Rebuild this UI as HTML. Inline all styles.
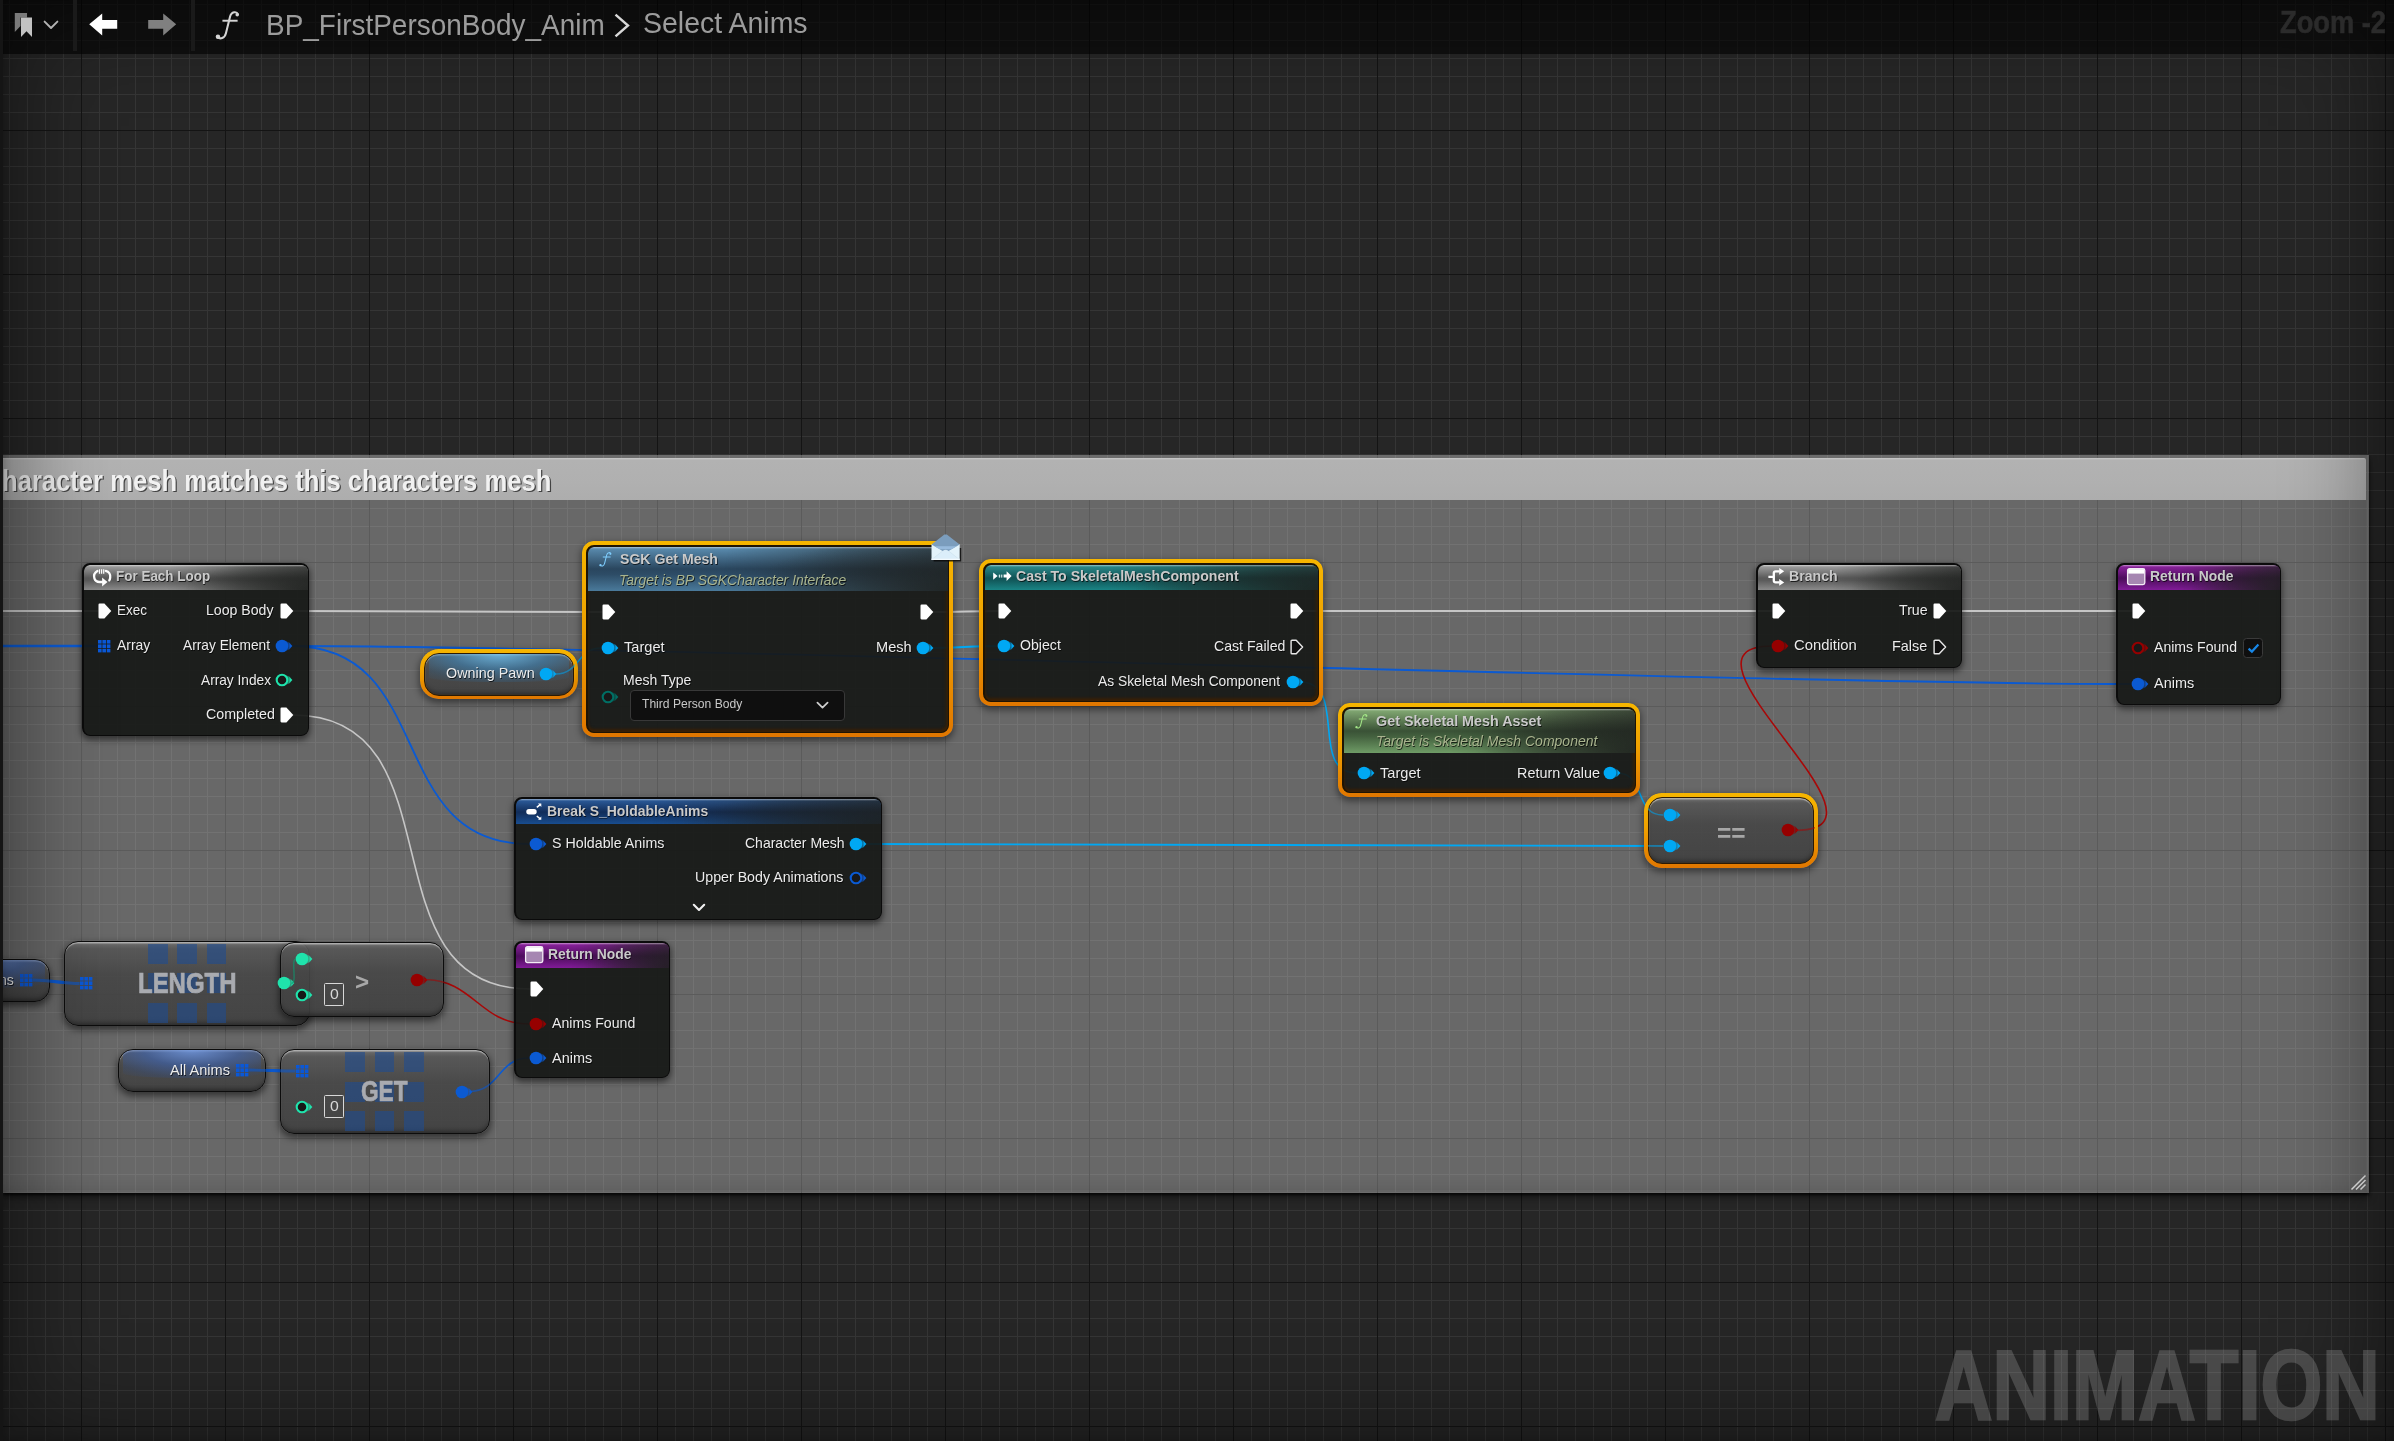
<!DOCTYPE html>
<html lang="en">
<head>
<meta charset="utf-8">
<title>BP_FirstPersonBody_Anim - Select Anims</title>
<style>
html,body{margin:0;padding:0;background:#151515;}
body{width:2394px;height:1441px;overflow:hidden;position:relative;font-family:"Liberation Sans",sans-serif;}
#graph{position:absolute;left:3px;top:0;width:2391px;height:1441px;overflow:hidden;background-color:#262626;
 background-image:
  linear-gradient(to right,#141414 1px,transparent 1px),
  linear-gradient(to bottom,#141414 1px,transparent 1px),
  linear-gradient(to right,#353535 1px,transparent 1px),
  linear-gradient(to bottom,#353535 1px,transparent 1px);
 background-size:144px 144px,144px 144px,18px 18px,18px 18px;
 background-position:78px 0,0 130px,6px 0,0 4px;}
#g{position:absolute;left:0;top:0;width:2394px;height:1441px;overflow:hidden}
.a{position:absolute;display:block;overflow:visible}
.t{position:absolute;white-space:nowrap;transform-origin:0 50%;display:block;}
#comment{position:absolute;left:3px;top:455px;width:2366px;height:738px;background:rgba(255,255,255,.305);box-shadow:0 2px 2.5px rgba(0,0,0,.75),0 5px 8px rgba(0,0,0,.4);}
#comment .in{position:absolute;left:0;top:0;right:0;bottom:0;box-shadow:inset 0 0 0 3px rgba(255,255,255,.03), inset 0 -14px 14px -10px rgba(0,0,0,.12);}
#ctitle{position:absolute;left:0;top:3px;width:2363px;height:42px;background:linear-gradient(to bottom,#c9c9c9 0,#b2b2b2 2px,#b0b0b0 60%,#adadad 100%);border-radius:0 2px 0 0;overflow:hidden}
#ctitle span{position:absolute;right:1816.5px;top:4px;font-size:28px;line-height:34px;font-weight:700;color:#f1f1f1;white-space:nowrap;text-shadow:1.6px 1.6px 0 rgba(0,0,0,.75);transform-origin:100% 50%;}
.node{position:absolute;box-sizing:border-box;background:rgba(23,25,23,.93);border:solid #0b0b0b;border-width:2px 1px 1px 2px;box-shadow:0 3px 6px 1px rgba(0,0,0,.5);overflow:hidden;}
.node.s{border-color:#1e1404;box-shadow:inset 0 -4px 3px -1px rgba(60,32,4,.85),inset -4px 0 3px -1.5px rgba(58,34,4,.6),inset 0 0 2px 1px rgba(58,34,4,.5);}
.hdr{position:absolute;left:0;right:0;top:0;border-radius:6px 6px 0 0;}
.hdr:before{content:"";position:absolute;left:0;top:0;right:0;bottom:0;border-radius:6px 6px 0 0;background:
  linear-gradient(to bottom,rgba(255,255,255,.5) 0,rgba(255,255,255,.12) 1.4px,rgba(255,255,255,0) 2.5px),
  radial-gradient(ellipse 55% 130% at 100% 100%,rgba(28,30,28,.75) 0,rgba(28,30,28,.35) 55%,rgba(28,30,28,0) 100%),linear-gradient(100deg,rgba(34,36,34,0) 0%,rgba(34,36,34,0) 38%,rgba(34,36,34,.4) 70%,rgba(36,38,36,.68) 100%);}
.h-gray{background:linear-gradient(to bottom,#a4a4a4 0,#5a5a5a 52%,#5c5c5c 62%,#8b8b8b 100%)}
.h-func{background:linear-gradient(to bottom,#5c8fb3 0,#2a465e 50%,#2d4c66 62%,#4a7a9b 100%)}
.h-cast{background:linear-gradient(to bottom,#2d8f90 0,#115456 52%,#125a5c 62%,#1a8485 100%)}
.h-pure{background:linear-gradient(to bottom,#86ad76 0,#3a5236 50%,#43603e 62%,#6f9c66 100%)}
.h-ret{background:linear-gradient(to bottom,#9024a2 0,#4e0d5e 52%,#551065 62%,#811b98 100%)}
.h-struct{background:linear-gradient(to bottom,#2e5f9f 0,#112d5a 52%,#133363 62%,#184d90 100%)}
.sel{position:absolute;box-sizing:border-box;padding:5.5px;background:linear-gradient(to bottom,#f6b600 0,#f0a200 45%,#e07600 100%);-webkit-mask:linear-gradient(#000 0 0) content-box,linear-gradient(#000 0 0);-webkit-mask-composite:xor;mask:linear-gradient(#000 0 0) content-box exclude,linear-gradient(#000 0 0);}
.selsh{position:absolute;box-shadow:0 3px 7px 1px rgba(0,0,0,.45);}
.cnode{position:absolute;box-sizing:border-box;border:1.6px solid #0c0c0c;background:linear-gradient(to bottom,rgba(112,112,112,.92) 0,rgba(86,86,86,.9) 8%,rgba(70,70,70,.9) 40%,rgba(64,64,64,.9) 100%);box-shadow:inset 0 1.6px 1px -0.2px rgba(255,255,255,.45),inset 0 -5px 5px -3px rgba(0,0,0,.4),0 3px 7px 1px rgba(0,0,0,.5);overflow:hidden}
.cnode.s{border-color:#2a1a05;box-shadow:inset 0 1.6px 1px -0.2px rgba(255,255,255,.45),inset 0 -5px 5px -3px rgba(0,0,0,.4);}
.cnode i{position:absolute;left:3%;right:3%;top:0;height:68%;border-radius:0 0 40% 40%/0 0 18% 18%;}
.cnode.v-obj i{background:radial-gradient(ellipse 78% 125% at 50% 0,rgba(110,190,235,.85) 0,rgba(60,130,180,.62) 45%,rgba(50,100,140,.3) 78%,rgba(50,100,140,0) 100%);}
.cnode.v-struct i{background:radial-gradient(ellipse 78% 125% at 50% 0,rgba(110,150,225,.85) 0,rgba(60,100,180,.6) 45%,rgba(50,80,140,.3) 78%,rgba(50,80,140,0) 100%);}
.sq{position:absolute;background:rgba(30,76,146,.58)}
.box{position:absolute;box-sizing:border-box;}
#toolbar{position:absolute;left:3px;top:0;width:2391px;height:54px;background:rgba(0,0,0,.58);}
#vig{position:absolute;left:3px;top:0;width:2391px;height:1441px;box-shadow:inset 0 0 90px 18px rgba(0,0,0,.40), inset 0 0 10px 0 rgba(0,0,0,.25);pointer-events:none}
.sep{position:absolute;top:0;width:4px;height:50px;background:#1a1a1a}
</style>
</head>
<body>
<div id="graph"></div>
<div id="g">
<div id="comment"><div class="in"></div><div id="ctitle"></div>
<svg class="a" style="right:3px;bottom:3.5px" width="15" height="15" viewBox="0 0 15 15"><path d="M0.5 14.5 L14.5 0.5 M5 14.5 L14.5 5 M9.5 14.5 L14.5 9.5" stroke="#ececec" stroke-width="1.5" fill="none"/></svg>
</div>
<svg class="a" style="left:0;top:0" width="2394" height="1441" viewBox="0 0 2394 1441" stroke-linecap="round">
<path d="M3.0 611.0 C34.7 611.0 66.3 611.0 98.0 611.0" stroke="#c6c6c6" stroke-width="1.9" fill="none" opacity="1.0"/>
<path d="M293.0 611.0 C396.3 611.0 498.7 612.0 602.0 612.0" stroke="#c6c6c6" stroke-width="1.9" fill="none" opacity="1.0"/>
<path d="M934.0 612.0 C955.7 612.0 976.3 611.0 998.0 611.0" stroke="#c6c6c6" stroke-width="1.9" fill="none" opacity="1.0"/>
<path d="M1304.0 611.0 C1460.0 611.0 1616.0 611.0 1772.0 611.0" stroke="#c6c6c6" stroke-width="1.9" fill="none" opacity="1.0"/>
<path d="M1946.0 611.0 C2008.0 611.0 2070.0 611.0 2132.0 611.0" stroke="#c6c6c6" stroke-width="1.9" fill="none" opacity="1.0"/>
<path d="M293.0 715.0 C463.3 715.0 359.7 989.0 530.0 989.0" stroke="#c6c6c6" stroke-width="1.6" fill="none" opacity="1.0"/>
<path d="M3.0 646.0 C34.7 646.0 66.3 646.0 98.0 646.0" stroke="#0b5ad2" stroke-width="2.6" fill="none" opacity="1.0"/>
<path d="M292.0 646.0 C638.0 646.0 1785.0 684.0 2131.0 684.0" stroke="#0b5ad2" stroke-width="1.8" fill="none" opacity="1.0"/>
<path d="M292.0 646.0 C437.0 646.0 384.0 844.0 529.0 844.0" stroke="#0b5ad2" stroke-width="1.8" fill="none" opacity="1.0"/>
<path d="M556.0 674.0 C579.7 674.0 577.3 648.0 601.0 648.0" stroke="#00a8f4" stroke-width="1.6" fill="none" opacity="1.0"/>
<path d="M930.0 648.0 C953.3 648.0 974.7 646.0 998.0 646.0" stroke="#00a8f4" stroke-width="1.8" fill="none" opacity="1.0"/>
<path d="M1300.0 682.0 C1349.3 682.0 1307.7 773.0 1357.0 773.0" stroke="#00a8f4" stroke-width="1.6" fill="none" opacity="1.0"/>
<path d="M1617.0 773.0 C1646.3 773.0 1633.7 815.0 1663.0 815.0" stroke="#00a8f4" stroke-width="1.6" fill="none" opacity="1.0"/>
<path d="M862.0 844.0 C1129.7 844.0 1395.3 846.0 1663.0 846.0" stroke="#00a8f4" stroke-width="1.8" fill="none" opacity="1.0"/>
<path d="M1795.6 830.4 C1911.4 830.4 1656.2 646.0 1772.0 646.0" stroke="#a80808" stroke-width="1.6" fill="none" opacity="1.0"/>
<path d="M424.0 979.5 C473.8 979.5 479.2 1024.0 529.0 1024.0" stroke="#a80808" stroke-width="1.6" fill="none" opacity="1.0"/>
<path d="M469.0 1091.5 C500.2 1091.5 497.8 1058.0 529.0 1058.0" stroke="#0b5ad2" stroke-width="1.6" fill="none" opacity="1.0"/>
<path d="M32.6 980.0 C49.4 980.0 62.8 983.5 79.6 983.5" stroke="#0b5ad2" stroke-width="2.8" fill="none" opacity="1.0"/>
<path d="M248.6 1070.0 C264.6 1070.0 279.6 1071.0 295.6 1071.0" stroke="#0b5ad2" stroke-width="2.8" fill="none" opacity="1.0"/>
</svg>
<span class="t " style="left:1.61px;top:463.65px;font-size:29px;line-height:35px;font-weight:700;color:#f1f1f1;text-shadow:1.4px 1.4px 0.4px rgba(0,0,0,.62);transform:scaleX(0.8829);">haracter mesh matches this characters mesh</span>
<div class="cnode v-struct" style="left:-98.0px;top:959.0px;width:148.0px;height:42.5px;border-radius:15px"><i></i></div>
<span class="t " style="left:-0.52px;top:971.51px;font-size:14.4px;line-height:17px;color:#ececec;text-shadow:0.7px 0.9px 0 rgba(0,0,0,.7);transform:scaleX(0.9817);">ns</span>
<svg class="a" style="left:19.9px;top:973.8px" width="12.4" height="12.4" viewBox="0 0 12.4 12.4"><rect x="0.0" y="0.0" width="3.6" height="3.6" fill="#0a58d8"/><rect x="0.0" y="4.4" width="3.6" height="3.6" fill="#0a58d8"/><rect x="0.0" y="8.8" width="3.6" height="3.6" fill="#0a58d8"/><rect x="4.4" y="0.0" width="3.6" height="3.6" fill="#0a58d8"/><rect x="4.4" y="4.4" width="3.6" height="3.6" fill="#0a58d8"/><rect x="4.4" y="8.8" width="3.6" height="3.6" fill="#0a58d8"/><rect x="8.8" y="0.0" width="3.6" height="3.6" fill="#0a58d8"/><rect x="8.8" y="4.4" width="3.6" height="3.6" fill="#0a58d8"/><rect x="8.8" y="8.8" width="3.6" height="3.6" fill="#0a58d8"/></svg>
<div class="node" style="left:82.0px;top:563.0px;width:227.0px;height:173.0px;border-radius:8px">
<div class="hdr h-gray" style="height:25.0px"></div>
</div>
<svg class="a" style="left:92.7px;top:568.6px" width="19" height="18" viewBox="0 0 19 18"><path d="M4.4 2.0 C1.6 3.6 0.6 6.6 1.4 9.4 C2.2 12.0 4.2 13.0 6.6 13.0 H9.4" fill="none" stroke="#fff" stroke-width="2.3" stroke-linecap="round"/><path d="M9.1 8.5 L14.5 12.9 L9.1 17.4 Z" fill="#fff"/><path d="M12.8 1.8 C16.0 2.6 17.6 5.6 17.2 8.4 C17.1 9.6 16.8 10.6 16.3 11.4" fill="none" stroke="#fff" stroke-width="2.3" stroke-linecap="round"/><path d="M6.5 0.2 V4.7 M8.6 0.2 V4.7 M10.7 0.2 V4.7" stroke="#fff" stroke-width="1.2" fill="none"/></svg>
<span class="t " style="left:115.63px;top:567.44px;font-size:14.6px;line-height:18px;font-weight:700;color:#cacaca;text-shadow:0.7px 0.9px 0 rgba(0,0,0,.7);transform:scaleX(0.9219);">For Each Loop</span>
<svg class="a" style="left:98.0px;top:603.0px" width="14" height="16" viewBox="0 0 14 16"><path d="M1.6 0.6 H6.4 L13.3 8 L6.4 15.4 H1.6 Q0.5 15.4 0.5 14.3 V1.7 Q0.5 0.6 1.6 0.6 Z" fill="#fff"/></svg>
<span class="t " style="left:116.52px;top:602.41px;font-size:14.4px;line-height:17px;color:#ececec;text-shadow:0.7px 0.9px 0 rgba(0,0,0,.7);transform:scaleX(0.9401);">Exec</span>
<span class="t " style="left:206.17px;top:602.41px;font-size:14.4px;line-height:17px;color:#ececec;text-shadow:0.7px 0.9px 0 rgba(0,0,0,.7);transform:scaleX(0.9811);">Loop Body</span>
<svg class="a" style="left:280.0px;top:603.0px" width="14" height="16" viewBox="0 0 14 16"><path d="M1.6 0.6 H6.4 L13.3 8 L6.4 15.4 H1.6 Q0.5 15.4 0.5 14.3 V1.7 Q0.5 0.6 1.6 0.6 Z" fill="#fff"/></svg>
<svg class="a" style="left:98.0px;top:639.8px" width="12.4" height="12.4" viewBox="0 0 12.4 12.4"><rect x="0.0" y="0.0" width="3.6" height="3.6" fill="#0a58d8"/><rect x="0.0" y="4.4" width="3.6" height="3.6" fill="#0a58d8"/><rect x="0.0" y="8.8" width="3.6" height="3.6" fill="#0a58d8"/><rect x="4.4" y="0.0" width="3.6" height="3.6" fill="#0a58d8"/><rect x="4.4" y="4.4" width="3.6" height="3.6" fill="#0a58d8"/><rect x="4.4" y="8.8" width="3.6" height="3.6" fill="#0a58d8"/><rect x="8.8" y="0.0" width="3.6" height="3.6" fill="#0a58d8"/><rect x="8.8" y="4.4" width="3.6" height="3.6" fill="#0a58d8"/><rect x="8.8" y="8.8" width="3.6" height="3.6" fill="#0a58d8"/></svg>
<span class="t " style="left:116.50px;top:637.41px;font-size:14.4px;line-height:17px;color:#ececec;text-shadow:0.7px 0.9px 0 rgba(0,0,0,.7);transform:scaleX(0.9676);">Array</span>
<span class="t " style="left:183.40px;top:637.41px;font-size:14.4px;line-height:17px;color:#ececec;text-shadow:0.7px 0.9px 0 rgba(0,0,0,.7);transform:scaleX(0.9544);">Array Element</span>
<svg class="a" style="left:274.4px;top:638.0px" width="20" height="16" viewBox="0 0 20 16"><path d="M12.5 3.4 L16.2 5.1 V10.9 L12.5 12.6 Z" fill="#0b5ad2" opacity=".55"/><path d="M15.5 5.1 L18.4 8 L15.5 10.9 Z" fill="#0b5ad2"/><circle cx="8" cy="8" r="6.35" fill="#0b5ad2"/></svg>
<span class="t " style="left:200.50px;top:671.61px;font-size:14.4px;line-height:17px;color:#ececec;text-shadow:0.7px 0.9px 0 rgba(0,0,0,.7);transform:scaleX(0.9509);">Array Index</span>
<svg class="a" style="left:274.4px;top:672.2px" width="20" height="16" viewBox="0 0 20 16"><path d="M12.5 3.4 L16.2 5.1 V10.9 L12.5 12.6 Z" fill="#1fe3ac" opacity=".55"/><path d="M15.5 5.1 L18.4 8 L15.5 10.9 Z" fill="#1fe3ac"/><circle cx="8" cy="8" r="5.3" fill="#181818" stroke="#1fe3ac" stroke-width="2.1"/></svg>
<span class="t " style="left:205.59px;top:706.41px;font-size:14.4px;line-height:17px;color:#ececec;text-shadow:0.7px 0.9px 0 rgba(0,0,0,.7);transform:scaleX(0.9906);">Completed</span>
<svg class="a" style="left:280.0px;top:707.0px" width="14" height="16" viewBox="0 0 14 16"><path d="M1.6 0.6 H6.4 L13.3 8 L6.4 15.4 H1.6 Q0.5 15.4 0.5 14.3 V1.7 Q0.5 0.6 1.6 0.6 Z" fill="#fff"/></svg>
<div class="selsh" style="left:420.3px;top:649.0px;width:158.0px;height:50.3px;border-radius:18.6px"></div><div class="sel" style="left:420.3px;top:649.0px;width:158.0px;height:50.3px;border-radius:18.6px"></div>
<div class="cnode v-obj s" style="left:424.0px;top:653.0px;width:150.0px;height:42.5px;border-radius:15px"><i></i></div>
<span class="t " style="left:445.55px;top:665.21px;font-size:14.4px;line-height:17px;color:#ececec;text-shadow:0.7px 0.9px 0 rgba(0,0,0,.7);transform:scaleX(0.9984);">Owning Pawn</span>
<svg class="a" style="left:538.3px;top:666.0px" width="20" height="16" viewBox="0 0 20 16"><path d="M12.5 3.4 L16.2 5.1 V10.9 L12.5 12.6 Z" fill="#00a8f4" opacity=".55"/><path d="M15.5 5.1 L18.4 8 L15.5 10.9 Z" fill="#00a8f4"/><circle cx="8" cy="8" r="6.35" fill="#00a8f4"/></svg>
<div class="selsh" style="left:582.3px;top:541.0px;width:371.0px;height:195.8px;border-radius:11.6px"></div><div class="sel" style="left:582.3px;top:541.0px;width:371.0px;height:195.8px;border-radius:11.6px"></div>
<div class="node s" style="left:586.0px;top:545.0px;width:363.0px;height:188.0px;border-radius:8px">
<div class="hdr h-func" style="height:44.0px"></div>
</div>
<svg class="a" style="left:599.4px;top:551.8px" width="12.6" height="15.0" viewBox="0 0 12.6 15"><path d="M11.8 1.7 C11.2 0.2 8.4 0.0 7.7 3.0 L5.6 11.4 C4.9 14.2 2.6 14.6 1.2 13.4" fill="none" stroke="#80cfff" stroke-width="1.05" stroke-linecap="round"/><path d="M3.8 5.0 H11.6" stroke="#80cfff" stroke-width="1.0" fill="none"/><circle cx="1.5" cy="13.2" r="1.15" fill="#80cfff"/><circle cx="11.4" cy="1.9" r="0.9" fill="#80cfff"/></svg>
<span class="t " style="left:619.98px;top:549.94px;font-size:14.6px;line-height:18px;font-weight:700;color:#cacaca;text-shadow:0.7px 0.9px 0 rgba(0,0,0,.7);transform:scaleX(0.9662);">SGK Get Mesh</span>
<span class="t " style="left:619.35px;top:571.51px;font-size:14.4px;line-height:17px;font-style:italic;color:#a9b48e;text-shadow:0.7px 0.9px 0 rgba(0,0,0,.7);transform:scaleX(0.9678);">Target is BP SGKCharacter Interface</span>
<svg class="a" style="left:602.0px;top:604.0px" width="14" height="16" viewBox="0 0 14 16"><path d="M1.6 0.6 H6.4 L13.3 8 L6.4 15.4 H1.6 Q0.5 15.4 0.5 14.3 V1.7 Q0.5 0.6 1.6 0.6 Z" fill="#fff"/></svg>
<svg class="a" style="left:920.0px;top:604.0px" width="14" height="16" viewBox="0 0 14 16"><path d="M1.6 0.6 H6.4 L13.3 8 L6.4 15.4 H1.6 Q0.5 15.4 0.5 14.3 V1.7 Q0.5 0.6 1.6 0.6 Z" fill="#fff"/></svg>
<svg class="a" style="left:600.0px;top:639.6px" width="20" height="16" viewBox="0 0 20 16"><path d="M12.5 3.4 L16.2 5.1 V10.9 L12.5 12.6 Z" fill="#00a8f4" opacity=".55"/><path d="M15.5 5.1 L18.4 8 L15.5 10.9 Z" fill="#00a8f4"/><circle cx="8" cy="8" r="6.35" fill="#00a8f4"/></svg>
<span class="t " style="left:624.21px;top:638.81px;font-size:14.4px;line-height:17px;color:#ececec;text-shadow:0.7px 0.9px 0 rgba(0,0,0,.7);transform:scaleX(1.0152);">Target</span>
<span class="t " style="left:875.93px;top:638.81px;font-size:14.4px;line-height:17px;color:#ececec;text-shadow:0.7px 0.9px 0 rgba(0,0,0,.7);transform:scaleX(1.0123);">Mesh</span>
<svg class="a" style="left:915.2px;top:639.6px" width="20" height="16" viewBox="0 0 20 16"><path d="M12.5 3.4 L16.2 5.1 V10.9 L12.5 12.6 Z" fill="#00a8f4" opacity=".55"/><path d="M15.5 5.1 L18.4 8 L15.5 10.9 Z" fill="#00a8f4"/><circle cx="8" cy="8" r="6.35" fill="#00a8f4"/></svg>
<span class="t " style="left:623.38px;top:672.41px;font-size:14.4px;line-height:17px;color:#ececec;text-shadow:0.7px 0.9px 0 rgba(0,0,0,.7);transform:scaleX(0.9751);">Mesh Type</span>
<svg class="a" style="left:600.0px;top:689.0px" width="20" height="16" viewBox="0 0 20 16"><path d="M12.5 3.4 L16.2 5.1 V10.9 L12.5 12.6 Z" fill="#016e64" opacity=".55"/><path d="M15.5 5.1 L18.4 8 L15.5 10.9 Z" fill="#016e64"/><circle cx="8" cy="8" r="5.3" fill="#181818" stroke="#016e64" stroke-width="2.1"/></svg>
<div class="box" style="left:630.3px;top:689.5px;width:215.2px;height:31px;background:#0f0f0f;border:1px solid #383838;border-radius:4px"></div>
<span class="t " style="left:641.76px;top:696.93px;font-size:12.6px;line-height:15px;color:#c8c8c8;transform:scaleX(0.9608);">Third Person Body</span>
<svg class="a" style="left:815.8px;top:700.8px" width="13" height="9" viewBox="0 0 13 9"><path d="M1.4 1.6 L6.5 6.7 L11.6 1.6" stroke="#d0d0d0" stroke-width="1.7" fill="none" stroke-linecap="round" stroke-linejoin="round"/></svg>
<svg class="a" style="left:931.4px;top:533.9px" width="31" height="30" viewBox="0 0 31 30"><path d="M2.6 27.6 H30.2 V14 H28 V25 H2.6 Z" fill="rgba(8,8,8,.8)"/><path d="M0.5 10.2 H28.7 V26 H0.5 Z" fill="#e3f3fb"/><path d="M1.2 25.2 L11.6 17.0 C13.6 15.4 15.6 15.4 17.6 17.0 L28 25.2 Z" fill="#dbeefa" stroke="#cfe3ee" stroke-width="0.7"/><path d="M0.5 24.6 H28.7 V26 H0.5 Z" fill="#f3fbff"/><path d="M0.5 10.4 L13.4 0.5 H15.8 L28.7 10.4 L17.6 17.0 C15.6 15.4 13.6 15.4 11.6 17.0 Z" fill="#7b9dbd"/><path d="M3.6 12.2 L25.6 12.2 L20.4 15.3 L8.8 15.3 Z" fill="#9cc0e2" opacity=".85"/></svg>
<div class="selsh" style="left:979.3px;top:559.0px;width:344.0px;height:146.8px;border-radius:11.6px"></div><div class="sel" style="left:979.3px;top:559.0px;width:344.0px;height:146.8px;border-radius:11.6px"></div>
<div class="node s" style="left:983.0px;top:563.0px;width:336.0px;height:139.0px;border-radius:8px">
<div class="hdr h-cast" style="height:25.0px"></div>
</div>
<svg class="a" style="left:992.6px;top:571.3px" width="19" height="10" viewBox="0 0 19 10"><path d="M0.2 1.5 L4.6 5.1 L0.2 8.8 Z" fill="#fff"/><rect x="5.8" y="3.6" width="1.4" height="3" fill="#cfe8e8"/><rect x="8.2" y="3.6" width="1.1" height="3" fill="#e6f2f2"/><path d="M10.6 3.6 H13.6 V0.2 L18.6 5.1 L13.6 9.9 V6.6 H10.6 Z" fill="#fff"/></svg>
<span class="t " style="left:1016.03px;top:567.44px;font-size:14.6px;line-height:18px;font-weight:700;color:#cacaca;text-shadow:0.7px 0.9px 0 rgba(0,0,0,.7);transform:scaleX(0.9679);">Cast To SkeletalMeshComponent</span>
<svg class="a" style="left:998.2px;top:603.0px" width="14" height="16" viewBox="0 0 14 16"><path d="M1.6 0.6 H6.4 L13.3 8 L6.4 15.4 H1.6 Q0.5 15.4 0.5 14.3 V1.7 Q0.5 0.6 1.6 0.6 Z" fill="#fff"/></svg>
<svg class="a" style="left:1290.2px;top:603.0px" width="14" height="16" viewBox="0 0 14 16"><path d="M1.6 0.6 H6.4 L13.3 8 L6.4 15.4 H1.6 Q0.5 15.4 0.5 14.3 V1.7 Q0.5 0.6 1.6 0.6 Z" fill="#fff"/></svg>
<svg class="a" style="left:996.4px;top:638.0px" width="20" height="16" viewBox="0 0 20 16"><path d="M12.5 3.4 L16.2 5.1 V10.9 L12.5 12.6 Z" fill="#00a8f4" opacity=".55"/><path d="M15.5 5.1 L18.4 8 L15.5 10.9 Z" fill="#00a8f4"/><circle cx="8" cy="8" r="6.35" fill="#00a8f4"/></svg>
<span class="t " style="left:1019.76px;top:637.41px;font-size:14.4px;line-height:17px;color:#ececec;text-shadow:0.7px 0.9px 0 rgba(0,0,0,.7);transform:scaleX(0.9823);">Object</span>
<span class="t " style="left:1213.79px;top:638.41px;font-size:14.4px;line-height:17px;color:#ececec;text-shadow:0.7px 0.9px 0 rgba(0,0,0,.7);transform:scaleX(0.9816);">Cast Failed</span>
<svg class="a" style="left:1290.2px;top:639.0px" width="14" height="16" viewBox="0 0 14 16"><path d="M2 1.2 H6.2 L12.6 8 L6.2 14.8 H2 Q1.1 14.8 1.1 13.9 V2.1 Q1.1 1.2 2 1.2 Z" fill="#111" stroke="#e8e8e8" stroke-width="1.4" stroke-linejoin="round"/></svg>
<span class="t " style="left:1098.20px;top:673.41px;font-size:14.4px;line-height:17px;color:#ececec;text-shadow:0.7px 0.9px 0 rgba(0,0,0,.7);transform:scaleX(0.9606);">As Skeletal Mesh Component</span>
<svg class="a" style="left:1285.1px;top:674.0px" width="20" height="16" viewBox="0 0 20 16"><path d="M12.5 3.4 L16.2 5.1 V10.9 L12.5 12.6 Z" fill="#00a8f4" opacity=".55"/><path d="M15.5 5.1 L18.4 8 L15.5 10.9 Z" fill="#00a8f4"/><circle cx="8" cy="8" r="6.35" fill="#00a8f4"/></svg>
<div class="selsh" style="left:1338.3px;top:703.0px;width:302.0px;height:93.8px;border-radius:11.6px"></div><div class="sel" style="left:1338.3px;top:703.0px;width:302.0px;height:93.8px;border-radius:11.6px"></div>
<div class="node s" style="left:1342.0px;top:707.0px;width:294.0px;height:86.0px;border-radius:8px">
<div class="hdr h-pure" style="height:44.0px"></div>
</div>
<svg class="a" style="left:1355.4px;top:713.6px" width="12.6" height="15.0" viewBox="0 0 12.6 15"><path d="M11.8 1.7 C11.2 0.2 8.4 0.0 7.7 3.0 L5.6 11.4 C4.9 14.2 2.6 14.6 1.2 13.4" fill="none" stroke="#a4e888" stroke-width="1.05" stroke-linecap="round"/><path d="M3.8 5.0 H11.6" stroke="#a4e888" stroke-width="1.0" fill="none"/><circle cx="1.5" cy="13.2" r="1.15" fill="#a4e888"/><circle cx="11.4" cy="1.9" r="0.9" fill="#a4e888"/></svg>
<span class="t " style="left:1375.93px;top:711.54px;font-size:14.6px;line-height:18px;font-weight:700;color:#cacaca;text-shadow:0.7px 0.9px 0 rgba(0,0,0,.7);transform:scaleX(0.9829);">Get Skeletal Mesh Asset</span>
<span class="t " style="left:1375.54px;top:733.31px;font-size:14.4px;line-height:17px;font-style:italic;color:#a9b48e;text-shadow:0.7px 0.9px 0 rgba(0,0,0,.7);transform:scaleX(0.9735);">Target is Skeletal Mesh Component</span>
<svg class="a" style="left:1356.3px;top:765.4px" width="20" height="16" viewBox="0 0 20 16"><path d="M12.5 3.4 L16.2 5.1 V10.9 L12.5 12.6 Z" fill="#00a8f4" opacity=".55"/><path d="M15.5 5.1 L18.4 8 L15.5 10.9 Z" fill="#00a8f4"/><circle cx="8" cy="8" r="6.35" fill="#00a8f4"/></svg>
<span class="t " style="left:1380.31px;top:764.61px;font-size:14.4px;line-height:17px;color:#ececec;text-shadow:0.7px 0.9px 0 rgba(0,0,0,.7);transform:scaleX(1.0152);">Target</span>
<span class="t " style="left:1517.05px;top:764.61px;font-size:14.4px;line-height:17px;color:#ececec;text-shadow:0.7px 0.9px 0 rgba(0,0,0,.7);transform:scaleX(0.9998);">Return Value</span>
<svg class="a" style="left:1602.4px;top:765.4px" width="20" height="16" viewBox="0 0 20 16"><path d="M12.5 3.4 L16.2 5.1 V10.9 L12.5 12.6 Z" fill="#00a8f4" opacity=".55"/><path d="M15.5 5.1 L18.4 8 L15.5 10.9 Z" fill="#00a8f4"/><circle cx="8" cy="8" r="6.35" fill="#00a8f4"/></svg>
<div class="selsh" style="left:1644.3px;top:793.0px;width:174.0px;height:74.8px;border-radius:17.6px"></div><div class="sel" style="left:1644.3px;top:793.0px;width:174.0px;height:74.8px;border-radius:17.6px"></div>
<div class="cnode  s" style="left:1648.0px;top:797.0px;width:166.0px;height:67.0px;border-radius:14px"></div>
<svg class="a" style="left:1661.9px;top:807.1px" width="20" height="16" viewBox="0 0 20 16"><path d="M12.5 3.4 L16.2 5.1 V10.9 L12.5 12.6 Z" fill="#00a8f4" opacity=".55"/><path d="M15.5 5.1 L18.4 8 L15.5 10.9 Z" fill="#00a8f4"/><circle cx="8" cy="8" r="6.35" fill="#00a8f4"/></svg>
<svg class="a" style="left:1661.9px;top:837.6px" width="20" height="16" viewBox="0 0 20 16"><path d="M12.5 3.4 L16.2 5.1 V10.9 L12.5 12.6 Z" fill="#00a8f4" opacity=".55"/><path d="M15.5 5.1 L18.4 8 L15.5 10.9 Z" fill="#00a8f4"/><circle cx="8" cy="8" r="6.35" fill="#00a8f4"/></svg>
<svg class="a" style="left:1780.2px;top:822.4px" width="20" height="16" viewBox="0 0 20 16"><path d="M12.5 3.4 L16.2 5.1 V10.9 L12.5 12.6 Z" fill="#960000" opacity=".55"/><path d="M15.5 5.1 L18.4 8 L15.5 10.9 Z" fill="#960000"/><circle cx="8" cy="8" r="6.35" fill="#960000"/></svg>
<span class="t " style="left:1716.72px;top:817.54px;font-size:25px;line-height:30px;font-weight:700;color:#a6a6a6;transform:scaleX(0.9798);">==</span>
<div class="node" style="left:1756.0px;top:563.0px;width:206.0px;height:105.0px;border-radius:8px">
<div class="hdr h-gray" style="height:25.0px"></div>
</div>
<svg class="a" style="left:1767.7px;top:568.2px" width="17" height="18" viewBox="0 0 17 18"><path d="M0.4 8.9 H5.6 M11.6 3.3 H7.6 Q5.8 3.3 5.8 5.1 V12.6 Q5.8 14.4 7.6 14.4 H11.6" fill="none" stroke="#fff" stroke-width="2.3"/><path d="M11.2 0 L16.2 3.3 L11.2 6.7 Z M11.2 11 L16.2 14.4 L11.2 17.8 Z" fill="#fff"/></svg>
<span class="t " style="left:1789.48px;top:567.44px;font-size:14.6px;line-height:18px;font-weight:700;color:#cacaca;text-shadow:0.7px 0.9px 0 rgba(0,0,0,.7);transform:scaleX(0.9676);">Branch</span>
<svg class="a" style="left:1772.0px;top:603.0px" width="14" height="16" viewBox="0 0 14 16"><path d="M1.6 0.6 H6.4 L13.3 8 L6.4 15.4 H1.6 Q0.5 15.4 0.5 14.3 V1.7 Q0.5 0.6 1.6 0.6 Z" fill="#fff"/></svg>
<span class="t " style="left:1898.92px;top:602.41px;font-size:14.4px;line-height:17px;color:#ececec;text-shadow:0.7px 0.9px 0 rgba(0,0,0,.7);transform:scaleX(0.9850);">True</span>
<svg class="a" style="left:1933.1px;top:603.0px" width="14" height="16" viewBox="0 0 14 16"><path d="M1.6 0.6 H6.4 L13.3 8 L6.4 15.4 H1.6 Q0.5 15.4 0.5 14.3 V1.7 Q0.5 0.6 1.6 0.6 Z" fill="#fff"/></svg>
<svg class="a" style="left:1770.2px;top:638.0px" width="20" height="16" viewBox="0 0 20 16"><path d="M12.5 3.4 L16.2 5.1 V10.9 L12.5 12.6 Z" fill="#960000" opacity=".55"/><path d="M15.5 5.1 L18.4 8 L15.5 10.9 Z" fill="#960000"/><circle cx="8" cy="8" r="6.35" fill="#960000"/></svg>
<span class="t " style="left:1793.76px;top:637.41px;font-size:14.4px;line-height:17px;color:#ececec;text-shadow:0.7px 0.9px 0 rgba(0,0,0,.7);transform:scaleX(1.0311);">Condition</span>
<span class="t " style="left:1892.24px;top:638.41px;font-size:14.4px;line-height:17px;color:#ececec;text-shadow:0.7px 0.9px 0 rgba(0,0,0,.7);transform:scaleX(1.0036);">False</span>
<svg class="a" style="left:1933.1px;top:639.0px" width="14" height="16" viewBox="0 0 14 16"><path d="M2 1.2 H6.2 L12.6 8 L6.2 14.8 H2 Q1.1 14.8 1.1 13.9 V2.1 Q1.1 1.2 2 1.2 Z" fill="#111" stroke="#e8e8e8" stroke-width="1.4" stroke-linejoin="round"/></svg>
<div class="node" style="left:2116.0px;top:563.0px;width:165.0px;height:142.0px;border-radius:8px">
<div class="hdr h-ret" style="height:25.0px"></div>
</div>
<svg class="a" style="left:2126.6px;top:567.8px" width="19" height="18" viewBox="0 0 19 18"><rect x="0.6" y="0.6" width="17.2" height="16" rx="1.8" fill="#a686b2" stroke="#f4ecf6" stroke-width="1.3"/><path d="M1.2 1.2 H17.2 V5.6 H1.2 Z" fill="#fff"/></svg>
<span class="t " style="left:2149.70px;top:567.44px;font-size:14.6px;line-height:18px;font-weight:700;color:#cacaca;text-shadow:0.7px 0.9px 0 rgba(0,0,0,.7);transform:scaleX(0.9523);">Return Node</span>
<svg class="a" style="left:2132.0px;top:603.0px" width="14" height="16" viewBox="0 0 14 16"><path d="M1.6 0.6 H6.4 L13.3 8 L6.4 15.4 H1.6 Q0.5 15.4 0.5 14.3 V1.7 Q0.5 0.6 1.6 0.6 Z" fill="#fff"/></svg>
<svg class="a" style="left:2130.1px;top:640.1px" width="20" height="16" viewBox="0 0 20 16"><path d="M12.5 3.4 L16.2 5.1 V10.9 L12.5 12.6 Z" fill="#960000" opacity=".55"/><path d="M15.5 5.1 L18.4 8 L15.5 10.9 Z" fill="#960000"/><circle cx="8" cy="8" r="5.3" fill="#181818" stroke="#960000" stroke-width="2.1"/></svg>
<span class="t " style="left:2154.40px;top:639.41px;font-size:14.4px;line-height:17px;color:#ececec;text-shadow:0.7px 0.9px 0 rgba(0,0,0,.7);transform:scaleX(0.9791);">Anims Found</span>
<div class="box" style="left:2243px;top:638.4px;width:20px;height:19.5px;background:#0f0f0f;border:1px solid #3a3a3a;border-radius:3.5px"></div>
<svg class="a" style="left:2246.5px;top:642px" width="13" height="12" viewBox="0 0 13 12"><path d="M1.6 6.6 L4.9 9.6 L11.4 2.4" stroke="#1787e8" stroke-width="2.2" fill="none"/></svg>
<svg class="a" style="left:2130.1px;top:676.0px" width="20" height="16" viewBox="0 0 20 16"><path d="M12.5 3.4 L16.2 5.1 V10.9 L12.5 12.6 Z" fill="#0b5ad2" opacity=".55"/><path d="M15.5 5.1 L18.4 8 L15.5 10.9 Z" fill="#0b5ad2"/><circle cx="8" cy="8" r="6.35" fill="#0b5ad2"/></svg>
<span class="t " style="left:2154.40px;top:675.41px;font-size:14.4px;line-height:17px;color:#ececec;text-shadow:0.7px 0.9px 0 rgba(0,0,0,.7);transform:scaleX(1.0044);">Anims</span>
<div class="node" style="left:514.0px;top:797.0px;width:368.0px;height:123.0px;border-radius:8px">
<div class="hdr h-struct" style="height:25.0px"></div>
</div>
<svg class="a" style="left:525.7px;top:802.6px" width="16" height="17" viewBox="0 0 16 17"><rect x="0.3" y="6.0" width="10.4" height="5.4" rx="2.7" fill="#fff"/><path d="M10.8 4.4 L14.2 1.6 M10.8 13 L14.2 15.8" stroke="#fff" stroke-width="1.5" fill="none"/><path d="M12.0 0.6 H15.3 V3.9 Z M12.0 16.8 H15.3 V13.5 Z" fill="#fff"/></svg>
<span class="t " style="left:547.49px;top:801.94px;font-size:14.6px;line-height:18px;font-weight:700;color:#cacaca;text-shadow:0.7px 0.9px 0 rgba(0,0,0,.7);transform:scaleX(0.9555);">Break S_HoldableAnims</span>
<svg class="a" style="left:528.3px;top:836.1px" width="20" height="16" viewBox="0 0 20 16"><path d="M12.5 3.4 L16.2 5.1 V10.9 L12.5 12.6 Z" fill="#0b5ad2" opacity=".55"/><path d="M15.5 5.1 L18.4 8 L15.5 10.9 Z" fill="#0b5ad2"/><circle cx="8" cy="8" r="6.35" fill="#0b5ad2"/></svg>
<span class="t " style="left:551.76px;top:835.41px;font-size:14.4px;line-height:17px;color:#ececec;text-shadow:0.7px 0.9px 0 rgba(0,0,0,.7);transform:scaleX(0.9899);">S Holdable Anims</span>
<span class="t " style="left:744.60px;top:835.41px;font-size:14.4px;line-height:17px;color:#ececec;text-shadow:0.7px 0.9px 0 rgba(0,0,0,.7);transform:scaleX(0.9735);">Character Mesh</span>
<svg class="a" style="left:847.6px;top:836.1px" width="20" height="16" viewBox="0 0 20 16"><path d="M12.5 3.4 L16.2 5.1 V10.9 L12.5 12.6 Z" fill="#00a8f4" opacity=".55"/><path d="M15.5 5.1 L18.4 8 L15.5 10.9 Z" fill="#00a8f4"/><circle cx="8" cy="8" r="6.35" fill="#00a8f4"/></svg>
<span class="t " style="left:695.43px;top:869.41px;font-size:14.4px;line-height:17px;color:#ececec;text-shadow:0.7px 0.9px 0 rgba(0,0,0,.7);transform:scaleX(0.9873);">Upper Body Animations</span>
<svg class="a" style="left:847.6px;top:870.0px" width="20" height="16" viewBox="0 0 20 16"><path d="M12.5 3.4 L16.2 5.1 V10.9 L12.5 12.6 Z" fill="#0b5ad2" opacity=".55"/><path d="M15.5 5.1 L18.4 8 L15.5 10.9 Z" fill="#0b5ad2"/><circle cx="8" cy="8" r="5.3" fill="#181818" stroke="#0b5ad2" stroke-width="2.1"/></svg>
<svg class="a" style="left:692.4px;top:902.7px" width="14" height="10" viewBox="0 0 14 10"><path d="M1.8 1.8 L7 7 L12.2 1.8" stroke="#f0f0f0" stroke-width="2.1" fill="none" stroke-linecap="round" stroke-linejoin="round"/></svg>
<div class="node" style="left:514.0px;top:941.0px;width:156.0px;height:137.0px;border-radius:8px">
<div class="hdr h-ret" style="height:25.0px"></div>
</div>
<svg class="a" style="left:524.7px;top:945.8px" width="19" height="18" viewBox="0 0 19 18"><rect x="0.6" y="0.6" width="17.2" height="16" rx="1.8" fill="#a686b2" stroke="#f4ecf6" stroke-width="1.3"/><path d="M1.2 1.2 H17.2 V5.6 H1.2 Z" fill="#fff"/></svg>
<span class="t " style="left:547.50px;top:945.44px;font-size:14.6px;line-height:18px;font-weight:700;color:#cacaca;text-shadow:0.7px 0.9px 0 rgba(0,0,0,.7);transform:scaleX(0.9523);">Return Node</span>
<svg class="a" style="left:529.8px;top:981.2px" width="14" height="16" viewBox="0 0 14 16"><path d="M1.6 0.6 H6.4 L13.3 8 L6.4 15.4 H1.6 Q0.5 15.4 0.5 14.3 V1.7 Q0.5 0.6 1.6 0.6 Z" fill="#fff"/></svg>
<svg class="a" style="left:528.3px;top:1016.2px" width="20" height="16" viewBox="0 0 20 16"><path d="M12.5 3.4 L16.2 5.1 V10.9 L12.5 12.6 Z" fill="#960000" opacity=".55"/><path d="M15.5 5.1 L18.4 8 L15.5 10.9 Z" fill="#960000"/><circle cx="8" cy="8" r="6.35" fill="#960000"/></svg>
<span class="t " style="left:552.40px;top:1015.41px;font-size:14.4px;line-height:17px;color:#ececec;text-shadow:0.7px 0.9px 0 rgba(0,0,0,.7);transform:scaleX(0.9827);">Anims Found</span>
<svg class="a" style="left:528.3px;top:1050.4px" width="20" height="16" viewBox="0 0 20 16"><path d="M12.5 3.4 L16.2 5.1 V10.9 L12.5 12.6 Z" fill="#0b5ad2" opacity=".55"/><path d="M15.5 5.1 L18.4 8 L15.5 10.9 Z" fill="#0b5ad2"/><circle cx="8" cy="8" r="6.35" fill="#0b5ad2"/></svg>
<span class="t " style="left:552.40px;top:1049.61px;font-size:14.4px;line-height:17px;color:#ececec;text-shadow:0.7px 0.9px 0 rgba(0,0,0,.7);transform:scaleX(1.0044);">Anims</span>
<div class="cnode " style="left:64.0px;top:941.0px;width:246.0px;height:84.5px;border-radius:14px"></div>
<div class="sq" style="left:148.1px;top:944.0px;width:19.8px;height:19.8px"></div>
<div class="sq" style="left:148.1px;top:973.4px;width:19.8px;height:19.8px"></div>
<div class="sq" style="left:148.1px;top:1003.2px;width:19.8px;height:19.8px"></div>
<div class="sq" style="left:177.3px;top:944.0px;width:19.8px;height:19.8px"></div>
<div class="sq" style="left:177.3px;top:973.4px;width:19.8px;height:19.8px"></div>
<div class="sq" style="left:177.3px;top:1003.2px;width:19.8px;height:19.8px"></div>
<div class="sq" style="left:206.5px;top:944.0px;width:19.8px;height:19.8px"></div>
<div class="sq" style="left:206.5px;top:973.4px;width:19.8px;height:19.8px"></div>
<div class="sq" style="left:206.5px;top:1003.2px;width:19.8px;height:19.8px"></div>
<svg class="a" style="left:79.8px;top:977.3px" width="12.4" height="12.4" viewBox="0 0 12.4 12.4"><rect x="0.0" y="0.0" width="3.6" height="3.6" fill="#0a58d8"/><rect x="0.0" y="4.4" width="3.6" height="3.6" fill="#0a58d8"/><rect x="0.0" y="8.8" width="3.6" height="3.6" fill="#0a58d8"/><rect x="4.4" y="0.0" width="3.6" height="3.6" fill="#0a58d8"/><rect x="4.4" y="4.4" width="3.6" height="3.6" fill="#0a58d8"/><rect x="4.4" y="8.8" width="3.6" height="3.6" fill="#0a58d8"/><rect x="8.8" y="0.0" width="3.6" height="3.6" fill="#0a58d8"/><rect x="8.8" y="4.4" width="3.6" height="3.6" fill="#0a58d8"/><rect x="8.8" y="8.8" width="3.6" height="3.6" fill="#0a58d8"/></svg>
<span class="t " style="left:137.74px;top:965.24px;font-size:30.2px;line-height:36px;font-weight:700;color:#a9abb0;transform:scaleX(0.7937);-webkit-text-stroke:0.7px #a9abb0;">LENGTH</span>
<div class="cnode over" style="left:280.0px;top:942.0px;width:164.0px;height:75.0px;border-radius:14px"></div>
<svg class="a" style="left:276.3px;top:975.4px" width="20" height="16" viewBox="0 0 20 16"><path d="M12.5 3.4 L16.2 5.1 V10.9 L12.5 12.6 Z" fill="#1fe3ac" opacity=".55"/><path d="M15.5 5.1 L18.4 8 L15.5 10.9 Z" fill="#1fe3ac"/><circle cx="8" cy="8" r="6.35" fill="#1fe3ac"/></svg>
<svg class="a" style="left:293.8px;top:950.9px" width="20" height="16" viewBox="0 0 20 16"><path d="M12.5 3.4 L16.2 5.1 V10.9 L12.5 12.6 Z" fill="#1fe3ac" opacity=".55"/><path d="M15.5 5.1 L18.4 8 L15.5 10.9 Z" fill="#1fe3ac"/><circle cx="8" cy="8" r="6.35" fill="#1fe3ac"/></svg>
<svg class="a" style="left:293.8px;top:986.5px" width="20" height="16" viewBox="0 0 20 16"><path d="M12.5 3.4 L16.2 5.1 V10.9 L12.5 12.6 Z" fill="#1fe3ac" opacity=".55"/><path d="M15.5 5.1 L18.4 8 L15.5 10.9 Z" fill="#1fe3ac"/><circle cx="8" cy="8" r="5.3" fill="#181818" stroke="#1fe3ac" stroke-width="2.1"/></svg>
<div class="box" style="left:324px;top:983px;width:20.2px;height:22.8px;border:1.3px solid #d8d8d8;border-radius:1.5px"></div>
<span class="t " style="left:329.67px;top:986.05px;font-size:14px;line-height:17px;color:#d8d8d8;transform:scaleX(1.1310);">0</span>
<span class="t " style="left:355.03px;top:967.48px;font-size:24px;line-height:29px;font-weight:700;color:#a8a8a8;transform:scaleX(1.0066);">&gt;</span>
<svg class="a" style="left:409.1px;top:971.5px" width="20" height="16" viewBox="0 0 20 16"><path d="M12.5 3.4 L16.2 5.1 V10.9 L12.5 12.6 Z" fill="#960000" opacity=".55"/><path d="M15.5 5.1 L18.4 8 L15.5 10.9 Z" fill="#960000"/><circle cx="8" cy="8" r="6.35" fill="#960000"/></svg>
<div class="cnode v-struct" style="left:118.0px;top:1049.0px;width:148.0px;height:42.5px;border-radius:15px"><i></i></div>
<span class="t " style="left:170.20px;top:1061.61px;font-size:14.4px;line-height:17px;color:#ececec;text-shadow:0.7px 0.9px 0 rgba(0,0,0,.7);transform:scaleX(1.0144);">All Anims</span>
<svg class="a" style="left:235.9px;top:1063.9px" width="12.4" height="12.4" viewBox="0 0 12.4 12.4"><rect x="0.0" y="0.0" width="3.6" height="3.6" fill="#0a58d8"/><rect x="0.0" y="4.4" width="3.6" height="3.6" fill="#0a58d8"/><rect x="0.0" y="8.8" width="3.6" height="3.6" fill="#0a58d8"/><rect x="4.4" y="0.0" width="3.6" height="3.6" fill="#0a58d8"/><rect x="4.4" y="4.4" width="3.6" height="3.6" fill="#0a58d8"/><rect x="4.4" y="8.8" width="3.6" height="3.6" fill="#0a58d8"/><rect x="8.8" y="0.0" width="3.6" height="3.6" fill="#0a58d8"/><rect x="8.8" y="4.4" width="3.6" height="3.6" fill="#0a58d8"/><rect x="8.8" y="8.8" width="3.6" height="3.6" fill="#0a58d8"/></svg>
<div class="cnode " style="left:280.0px;top:1049.0px;width:209.5px;height:84.5px;border-radius:14px"></div>
<div class="sq" style="left:345.0px;top:1052.0px;width:19.8px;height:19.8px"></div>
<div class="sq" style="left:345.0px;top:1081.8px;width:19.8px;height:19.8px"></div>
<div class="sq" style="left:345.0px;top:1111.4px;width:19.8px;height:19.8px"></div>
<div class="sq" style="left:374.5px;top:1052.0px;width:19.8px;height:19.8px"></div>
<div class="sq" style="left:374.5px;top:1081.8px;width:19.8px;height:19.8px"></div>
<div class="sq" style="left:374.5px;top:1111.4px;width:19.8px;height:19.8px"></div>
<div class="sq" style="left:404.1px;top:1052.0px;width:19.8px;height:19.8px"></div>
<div class="sq" style="left:404.1px;top:1081.8px;width:19.8px;height:19.8px"></div>
<div class="sq" style="left:404.1px;top:1111.4px;width:19.8px;height:19.8px"></div>
<svg class="a" style="left:295.9px;top:1064.9px" width="12.4" height="12.4" viewBox="0 0 12.4 12.4"><rect x="0.0" y="0.0" width="3.6" height="3.6" fill="#0a58d8"/><rect x="0.0" y="4.4" width="3.6" height="3.6" fill="#0a58d8"/><rect x="0.0" y="8.8" width="3.6" height="3.6" fill="#0a58d8"/><rect x="4.4" y="0.0" width="3.6" height="3.6" fill="#0a58d8"/><rect x="4.4" y="4.4" width="3.6" height="3.6" fill="#0a58d8"/><rect x="4.4" y="8.8" width="3.6" height="3.6" fill="#0a58d8"/><rect x="8.8" y="0.0" width="3.6" height="3.6" fill="#0a58d8"/><rect x="8.8" y="4.4" width="3.6" height="3.6" fill="#0a58d8"/><rect x="8.8" y="8.8" width="3.6" height="3.6" fill="#0a58d8"/></svg>
<svg class="a" style="left:293.8px;top:1098.6px" width="20" height="16" viewBox="0 0 20 16"><path d="M12.5 3.4 L16.2 5.1 V10.9 L12.5 12.6 Z" fill="#1fe3ac" opacity=".55"/><path d="M15.5 5.1 L18.4 8 L15.5 10.9 Z" fill="#1fe3ac"/><circle cx="8" cy="8" r="5.3" fill="#181818" stroke="#1fe3ac" stroke-width="2.1"/></svg>
<div class="box" style="left:324px;top:1095.3px;width:20.2px;height:22.8px;border:1.3px solid #d8d8d8;border-radius:1.5px"></div>
<span class="t " style="left:329.67px;top:1098.35px;font-size:14px;line-height:17px;color:#d8d8d8;transform:scaleX(1.1310);">0</span>
<span class="t " style="left:360.89px;top:1073.24px;font-size:30.2px;line-height:36px;font-weight:700;color:#a9abb0;transform:scaleX(0.7498);-webkit-text-stroke:0.7px #a9abb0;">GET</span>
<svg class="a" style="left:454.4px;top:1083.5px" width="20" height="16" viewBox="0 0 20 16"><path d="M12.5 3.4 L16.2 5.1 V10.9 L12.5 12.6 Z" fill="#0b5ad2" opacity=".55"/><path d="M15.5 5.1 L18.4 8 L15.5 10.9 Z" fill="#0b5ad2"/><circle cx="8" cy="8" r="6.35" fill="#0b5ad2"/></svg>
<svg class="a" style="left:0;top:0" width="2394" height="1441" viewBox="0 0 2394 1441" stroke-linecap="butt">
<clipPath id="wc1"><rect x="550" y="650" width="25" height="50"/></clipPath><path clip-path="url(#wc1)" d="M556.0 674.0 C579.7 674.0 577.3 648.0 601.0 648.0" stroke="#00a8f4" stroke-width="1.6" fill="none" opacity="0.5"/>
<clipPath id="wc2"><rect x="1648" y="796" width="22" height="70"/></clipPath><path clip-path="url(#wc2)" d="M1617.0 773.0 C1646.3 773.0 1633.7 815.0 1663.0 815.0" stroke="#00a8f4" stroke-width="1.6" fill="none" opacity="0.5"/>
<clipPath id="wc3"><rect x="1648" y="796" width="22" height="70"/></clipPath><path clip-path="url(#wc3)" d="M862.0 844.0 C1129.7 844.0 1395.3 846.0 1663.0 846.0" stroke="#00a8f4" stroke-width="1.8" fill="none" opacity="0.5"/>
<clipPath id="wc4"><rect x="1790" y="796" width="25" height="70"/></clipPath><path clip-path="url(#wc4)" d="M1795.6 830.4 C1911.4 830.4 1656.2 646.0 1772.0 646.0" stroke="#a80808" stroke-width="1.6" fill="none" opacity="0.5"/>
<clipPath id="wc5"><rect x="420" y="942" width="24.5" height="76"/></clipPath><path clip-path="url(#wc5)" d="M424.0 979.5 C473.8 979.5 479.2 1024.0 529.0 1024.0" stroke="#a80808" stroke-width="1.6" fill="none" opacity="0.55"/>
<clipPath id="wc6"><rect x="465" y="1050" width="25" height="84"/></clipPath><path clip-path="url(#wc6)" d="M469.0 1091.5 C500.2 1091.5 497.8 1058.0 529.0 1058.0" stroke="#0b5ad2" stroke-width="1.6" fill="none" opacity="0.55"/>
<path d="M32.6 980.0 C49.4 980.0 62.8 983.5 79.6 983.5" stroke="#0b5ad2" stroke-width="2.8" fill="none" opacity="0.55"/>
<path d="M248.6 1070.0 C264.6 1070.0 279.6 1071.0 295.6 1071.0" stroke="#0b5ad2" stroke-width="2.8" fill="none" opacity="0.55"/>
<path d="M291.5 983.4 C297.5 983.4 290.5 958.9 296 958.9" stroke="#14906c" stroke-width="1.3" fill="none" opacity=".8"/>
</svg>

</div>
<div id="vig"></div>
<div id="toolbar"></div>
<div class="sep" style="left:72.5px;height:51px"></div><div class="sep" style="left:191px;height:51px"></div>
<svg class="a" style="left:14px;top:12px" width="20" height="26" viewBox="0 0 20 26"><path d="M0.8 1 H13 V5.5 H6.5 V14 L0.8 20 Z" fill="#7a7a7a"/><path d="M7 5.5 H18 V25 L12.5 19.3 L7 25 Z" fill="#c2c2c2"/></svg>
<svg class="a" style="left:43px;top:20px" width="16" height="10" viewBox="0 0 16 10"><path d="M1.6 1.6 L8 8 L14.4 1.6" stroke="#b4b4b4" stroke-width="1.9" fill="none" stroke-linecap="round" stroke-linejoin="round"/></svg>
<svg class="a" style="left:89px;top:12.5px" width="29" height="23" viewBox="0 0 29 23"><path d="M0.2 11.3 L13.2 0.4 V6.9 H28.2 V15.7 H13.2 V22.4 Z" fill="#ffffff"/></svg>
<svg class="a" style="left:147.8px;top:12.5px" width="29" height="23" viewBox="0 0 29 23"><path d="M28.2 11.3 L15.2 0.4 V6.9 H0.2 V15.7 H15.2 V22.4 Z" fill="#808080"/></svg>
<svg class="a" style="left:215.0px;top:11.2px" width="24.6" height="29.2" viewBox="0 0 12.6 15"><path d="M11.8 1.7 C11.2 0.2 8.4 0.0 7.7 3.0 L5.6 11.4 C4.9 14.2 2.6 14.6 1.2 13.4" fill="none" stroke="#d4d4d4" stroke-width="1.05" stroke-linecap="round"/><path d="M3.8 5.0 H11.6" stroke="#d4d4d4" stroke-width="1.0" fill="none"/><circle cx="1.5" cy="13.2" r="1.15" fill="#d4d4d4"/><circle cx="11.4" cy="1.9" r="0.9" fill="#d4d4d4"/></svg>
<span class="t " style="left:266.26px;top:6.70px;font-size:30px;line-height:36px;color:#9c9c9c;transform:scaleX(0.9319);">BP_FirstPersonBody_Anim</span>
<svg class="a" style="left:613px;top:12.5px" width="18" height="25" viewBox="0 0 18 25"><path d="M2.5 1.6 L15 12.5 L2.5 23.4" stroke="#d8d8d8" stroke-width="2.4" fill="none" stroke-linejoin="miter"/></svg>
<span class="t " style="left:642.92px;top:4.80px;font-size:30px;line-height:36px;color:#9c9c9c;transform:scaleX(0.9491);">Select Anims</span>
<span class="t " style="left:2280.38px;top:3.82px;font-size:31.4px;line-height:38px;font-weight:700;color:#2b2b2b;transform:scaleX(0.8687);-webkit-text-stroke:0.6px #2b2b2b;">Zoom -2</span>
<span class="t " style="left:1934.81px;top:1326.47px;font-size:98.5px;line-height:118px;font-weight:700;color:#fff;transform:scaleX(0.8076);-webkit-text-stroke:2.6px #fff;opacity:.17;">ANIMATION</span>
<div style="position:absolute;left:0;top:0;width:3px;height:1441px;background:#151515"></div>
</body>
</html>
